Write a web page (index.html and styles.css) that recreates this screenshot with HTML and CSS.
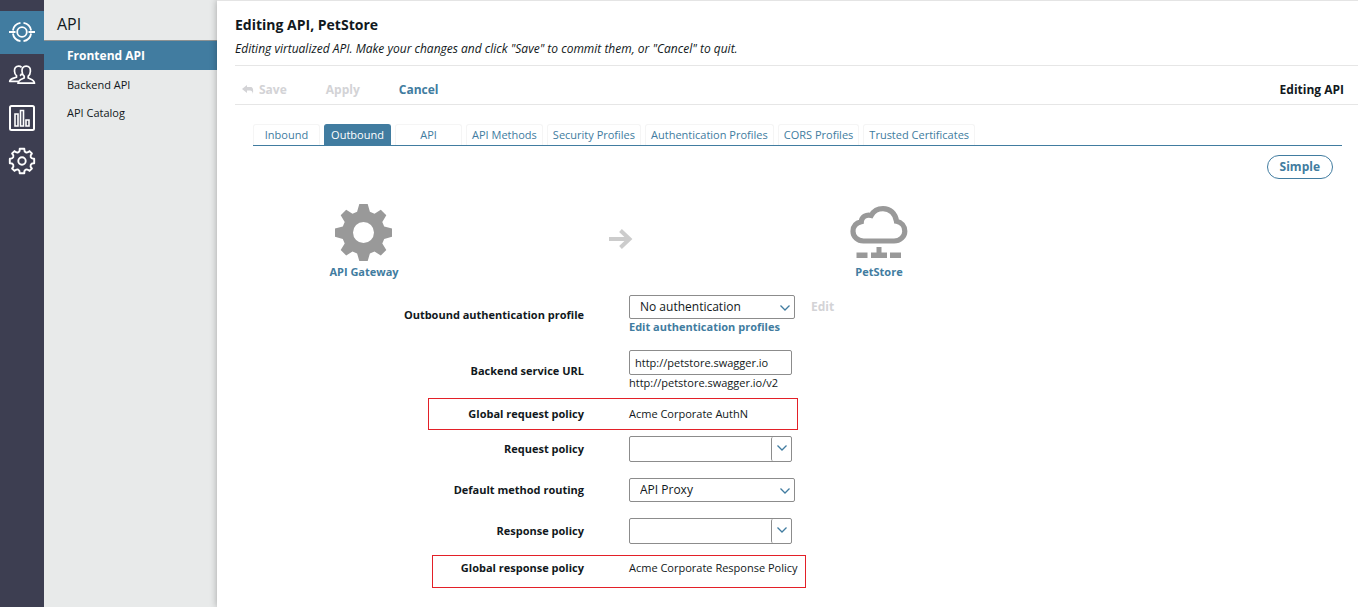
FILE: index.html
```html
<!DOCTYPE html>
<html lang="en">
<head>
<meta charset="utf-8">
<title>Editing API, PetStore</title>
<link rel="stylesheet" href="styles.css">
</head>
<body>
<div class="app">
  <nav class="rail" aria-label="Sections">
    <a class="rail-item rail-item-active" href="#" aria-label="API">
      <svg width="28" height="28" viewBox="0 0 28 28" fill="none" stroke="currentColor" stroke-width="1.8"><circle cx="14" cy="14" r="4.8"/><path d="M12.500 4.900A9.200 9.200 0 0 0 4.900 12.500M4.900 15.500A9.200 9.200 0 0 0 12.500 23.100M15.500 23.100A9.200 9.200 0 0 0 23.100 15.500M23.100 12.500A9.200 9.200 0 0 0 15.500 4.900M1 14h6.500M20.500 14H27"/></svg>
    </a>
    <a class="rail-item" href="#" aria-label="Clients">
      <svg width="28" height="28" viewBox="0 0 28 28" fill="none" stroke="currentColor" stroke-width="1.7" stroke-linejoin="round"><path d="M18.200 5.200c-3 0-4.400 2-4.200 5 .1 2.300.9 4 2.200 5v1.800c-2.700 1.300-6 1.800-6.200 5.200h16.500c-.2-3.400-3.600-3.900-6.300-5.200v-1.800c1.300-1 2.100-2.700 2.200-5 .2-3-1.200-5-4.200-5z"/><path d="M13.600 6.300c-.8-.8-1.800-1.100-2.900-1.100-3 0-4.400 2-4.200 5 .1 2 .8 3.500 2 4.400v1.600c-2.600 1.100-6.500 1.400-6.800 4.200H10M12 14.800c.8-.6 1.400-1.300 1.700-2.200"/></svg>
    </a>
    <a class="rail-item" href="#" aria-label="Monitoring">
      <svg width="28" height="28" viewBox="0 0 28 28" fill="none" stroke="currentColor" stroke-width="1.6"><rect x="2" y="2" width="24" height="24" rx="1.500" stroke-width="2"/><path d="M7 22V10h3v12zM12.500 22V6.500h3V22zM18 22v-6h3v6z"/></svg>
    </a>
    <a class="rail-item" href="#" aria-label="Settings">
      <svg width="28" height="28" viewBox="0 0 28 28" fill="none" stroke="currentColor" stroke-width="1.9" stroke-linejoin="round"><circle cx="14" cy="14" r="3.700"/><path d="M11.700 1.800q.3 2.800-1.500 3.500T6.500 4.100L4.100 6.500q2 2 1.200 3.700T1.800 11.700v4.600q2.800-.2 3.500 1.500T4.100 21.500l2.400 2.400q2-2 3.700-1.200t1.500 3.500h4.600q-.2-2.800 1.500-3.500t3.700 1.200l2.400-2.400q-2-2-1.200-3.700t3.500-1.500v-4.600q-2.800.2-3.500-1.500t1.200-3.700l-2.400-2.400q-2 2-3.700 1.200t-1.500-3.500z"/></svg>
    </a>
  </nav>

  <aside class="sidebar">
    <h2 class="sidebar-title">API</h2>
    <ul class="menu">
      <li><a class="menu-link menu-link-active" href="#">Frontend API</a></li>
      <li><a class="menu-link" href="#">Backend API</a></li>
      <li><a class="menu-link" href="#">API Catalog</a></li>
    </ul>
  </aside>

  <main class="main">
    <header class="heading">
      <h1 class="title">Editing API, PetStore</h1>
      <p class="subtitle">Editing virtualized API. Make your changes and click "Save" to commit them, or "Cancel" to quit.</p>
    </header>

    <div class="toolbar">
      <button class="action" type="button" disabled>
        <svg width="12" height="10" viewBox="0 0 12 10" fill="currentColor"><path d="M5 0v2h3.500C11 2 11.500 4 11 9 10.400 6.400 9.500 5.600 8 5.600H5V8L0 4z"/></svg>
        Save
      </button>
      <button class="action" type="button" disabled>Apply</button>
      <button class="action" type="button">Cancel</button>
      <span class="mode">Editing API</span>
    </div>

    <nav class="tabs" aria-label="API settings">
      <a class="tab" href="#">Inbound</a>
      <a class="tab tab-active" href="#">Outbound</a>
      <a class="tab" href="#">API</a>
      <a class="tab" href="#">API Methods</a>
      <a class="tab" href="#">Security Profiles</a>
      <a class="tab" href="#">Authentication Profiles</a>
      <a class="tab" href="#">CORS Profiles</a>
      <a class="tab" href="#">Trusted Certificates</a>
    </nav>

    <div class="view-switch"><button class="pill" type="button">Simple</button></div>

    <div class="flow">
      <div class="node">
        <svg width="58" height="58" viewBox="0 0 58 58" fill="currentColor"><path fill-rule="evenodd" d="M24.300 0h8.400l2.200 7.800 4.600 1.900 6.300-4 5.500 5.500-4 6.700 1.900 4.600 7.800 2v8.200l-7.800 2.200-1.900 4.600 4 6.500-5.500 5.500-6.300-4-4.600 1.900-2.200 7.600h-8.400l-2.200-7.600-4.600-1.900-6.300 4L5.700 46l4-6.500-1.900-4.600L0 32.700v-8.200l7.800-2 1.900-4.600-4-6.700 5.500-5.500 6.300 4 4.600-1.900zM28.500 18a10.500 10.500 0 1 0 0 21 10.500 10.500 0 0 0 0-21z"/></svg>
        <a class="node-label" href="#">API Gateway</a>
      </div>
      <svg class="arrow" width="24" height="22" viewBox="0 0 24 22" fill="none" stroke="currentColor" stroke-width="4"><path d="M0 11h20M11.500 2.500L20.500 11l-9 8.500"/></svg>
      <div class="node">
        <svg width="58" height="58" viewBox="0 0 58 58"><path d="M13.500 37h30.500c6 0 10.800-4.300 10.800-9.800 0-5.200-3.300-9-8.300-9.900C45.500 9.500 40 4.600 33 4.600c-5.500 0-9.500 2.600-11.800 6.800-5-1.300-9.700 1.500-9.900 6.300C6 18.800 3 22.400 3 27.200 3 32.700 7.500 37 13.500 37z" fill="none" stroke="currentColor" stroke-width="5.200"/><path d="M6.500 48.500h11v5.500h-11zM21 48.500h5.500V43h5v5.500H37V54H21zM40 48.500h11V54H40z" fill="currentColor"/></svg>
        <a class="node-label" href="#">PetStore</a>
      </div>
    </div>

    <form class="form">
      <div class="row row-double">
        <label class="label" for="auth">Outbound authentication profile</label>
        <div class="field">
          <div class="inline">
            <span class="select-wrap">
              <select class="control select" id="auth"><option>No authentication</option></select>
              <svg class="chevron" width="10" height="6" viewBox="0 0 10 6"><path d="M.5.500L5 5 9.500.500"/></svg>
            </span>
            <button class="edit" type="button" disabled>Edit</button>
          </div>
          <a class="link" href="#">Edit authentication profiles</a>
        </div>
      </div>
      <div class="row row-double">
        <label class="label" for="url">Backend service URL</label>
        <div class="field">
          <input class="control input" id="url" type="text" value="http://petstore.swagger.io">
          <span class="hint">http://petstore.swagger.io/v2</span>
        </div>
      </div>
      <div class="row row-marked">
        <span class="label">Global request policy</span>
        <span class="value">Acme Corporate AuthN</span>
      </div>
      <div class="row">
        <label class="label" for="request">Request policy</label>
        <div class="combo">
          <input class="combo-input" id="request" type="text">
          <button class="combo-button" type="button" aria-label="Choose request policy"><svg class="combo-chevron" width="10" height="6" viewBox="0 0 10 6"><path d="M.5.500L5 5 9.500.500"/></svg></button>
        </div>
      </div>
      <div class="row">
        <label class="label" for="routing">Default method routing</label>
        <span class="select-wrap">
          <select class="control select" id="routing"><option>API Proxy</option></select>
          <svg class="chevron" width="10" height="6" viewBox="0 0 10 6"><path d="M.5.500L5 5 9.500.500"/></svg>
        </span>
      </div>
      <div class="row">
        <label class="label" for="response">Response policy</label>
        <div class="combo">
          <input class="combo-input" id="response" type="text">
          <button class="combo-button" type="button" aria-label="Choose response policy"><svg class="combo-chevron" width="10" height="6" viewBox="0 0 10 6"><path d="M.5.500L5 5 9.500.500"/></svg></button>
        </div>
      </div>
      <div class="row row-marked row-marked-last">
        <span class="label">Global response policy</span>
        <span class="value">Acme Corporate Response Policy</span>
      </div>
    </form>
  </main>
</div>
</body>
</html>
```

FILE: styles.css
```css
*, *::after { box-sizing: border-box; }

body {
  margin: 0;
  font: 11px/16px "Open Sans", sans-serif;
  color: #111820;
  background: #fff;
}

a { color: inherit; text-decoration: none; }
button, input, select { font: inherit; color: inherit; margin: 0; padding: 0; background: none; }
button { border: 0; }
svg { display: block; flex: none; }

.app { display: flex; min-height: 100vh; background: #e8eaea; }

.rail {
  flex: none;
  width: 44px;
  padding-top: 11px;
  background: #3d3e51;
  color: #fff;
}
.rail-item { display: flex; align-items: center; justify-content: center; height: 43px; padding-bottom: 2px; }
.rail-item-active { background: #417ca0; }

.sidebar { flex: none; width: 173px; }
.sidebar-title {
  margin: 0;
  padding: 12px 13px 4px;
  border-bottom: 1px solid #8e9292;
  font-size: 16px;
  line-height: 24px;
  font-weight: 400;
}
.menu { margin: 0; padding: 0; list-style: none; }
.menu-link { display: block; padding: 7px 23px 5px; }
.menu-link-active {
  padding: 7px 23px 6px;
  background: #417ca0;
  color: #fff;
  font-weight: 700;
  font-size: 12px;
}

.main {
  flex: 1;
  min-width: 0;
  border-top: 1px solid #e4e4e4;
  background: #fff;
  box-shadow: 0 0 7px rgba(0, 0, 0, 0.3);
}

.heading { margin-left: 18px; padding: 14px 0 8px; border-bottom: 1px solid #e6e6e6; }
.title { margin: 0; font-size: 14px; line-height: 20px; font-weight: 700; }
.subtitle { margin: 6px 0 0; font-size: 12px; font-style: italic; }

.toolbar {
  display: flex;
  align-items: center;
  gap: 39px;
  height: 39px;
  margin-left: 18px;
  padding: 10px 14px 0 7px;
  border-bottom: 1px solid #e6e6e6;
  font-size: 12px;
  font-weight: 700;
}
.action { display: flex; align-items: center; gap: 5px; color: #417ca0; }
.action:disabled, .edit:disabled { color: #d3d3d6; }
.mode { margin-left: auto; }

.tabs {
  display: flex;
  gap: 4px;
  margin: 19px 16px 0 36px;
  border-bottom: 1px solid #417ca0;
  color: #417ca0;
}
.tab {
  min-width: 67px;
  padding: 2px 5px;
  border: 1px solid #f5f5f5;
  border-bottom: 0;
  border-radius: 3px 3px 0 0;
  text-align: center;
}
.tab-active { border-color: #417ca0; background: #417ca0; color: #fff; }

.view-switch { display: flex; justify-content: flex-end; padding: 9px 25px 0 0; }
.pill {
  height: 24px;
  padding: 0 12px;
  border: 1px solid #417ca0;
  border-radius: 12px;
  color: #417ca0;
  font-size: 12px;
  font-weight: 700;
}

.flow { display: flex; margin: 25px 0 0 107px; color: #999; }
.node { display: flex; flex-direction: column; align-items: center; gap: 2px; width: 80px; }
.node-label { color: #417ca0; font-weight: 700; }
.arrow { margin: 24px 206px 0 205px; color: #ccc; }

.form { display: flex; flex-direction: column; margin-top: 15px; padding-bottom: 19px; }
.row {
  display: grid;
  grid-template-columns: 367px auto;
  column-gap: 45px;
  align-items: center;
  justify-content: start;
  margin-bottom: 16px;
}
.row-double { margin-bottom: 15px; }
.label { text-align: right; font-weight: 700; }
.field { display: flex; flex-direction: column; align-items: flex-start; }
.inline { display: flex; align-items: center; gap: 16px; }
.control { border: 1px solid #8c8c8c; border-radius: 2px; background: #fff; }
.select-wrap { position: relative; display: block; width: 166px; }
.select { display: block; width: 100%; height: 24px; padding-left: 10px; appearance: none; font-size: 12px; }
.chevron { position: absolute; right: 5px; top: 10px; pointer-events: none; }
.chevron, .combo-chevron { fill: none; stroke: #417ca0; stroke-width: 1.3; }
.edit { font-size: 12px; font-weight: 700; }
.link { color: #417ca0; font-weight: 700; }
.input { width: 163px; height: 25px; padding-left: 5px; }

.row-marked { margin: -8px 0 6px; min-height: 32px; position: relative; }
.row-marked::after {
  content: "";
  position: absolute;
  inset: 0 auto 0 211px;
  width: 370px;
  border: 1px solid #e32028;
}
.row-marked-last { margin: -5px 0 0; align-items: start; padding: 5px 0 12px; }
.row-marked-last::after { left: 215px; width: 374px; }

.combo {
  display: flex;
  width: 163px;
  height: 26px;
  border: 1px solid #8c8c8c;
  border-radius: 2px;
}
.combo-input { flex: 1; min-width: 0; padding: 0 6px; border: 0; }
.combo-button { display: flex; justify-content: center; width: 20px; padding-top: 8px; border-left: 1px solid #8c8c8c; border-radius: 2px; }
```
